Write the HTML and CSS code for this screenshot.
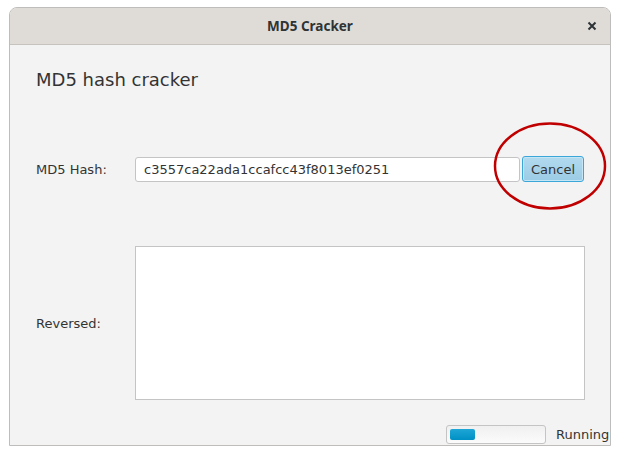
FILE: index.html
```html
<!DOCTYPE html>
<html>
<head>
<meta charset="utf-8">
<link rel="stylesheet" href="styles.css">
</head>
<body>
<div class="window">
  <div class="titlebar">
    <span class="title">MD5 Cracker</span>
    <svg class="close" width="10" height="10" viewBox="0 0 10 10"><path d="M1.5 1.5 L8.5 8.5 M8.5 1.5 L1.5 8.5" stroke="#2e3436" stroke-width="2" fill="none"/></svg>
  </div>
  <div class="content">
    <h1 class="heading">MD5 hash cracker</h1>
    <div class="row hash-row">
      <span class="label">MD5 Hash:</span>
      <div class="controls">
        <div class="field">c3557ca22ada1ccafcc43f8013ef0251</div>
        <button class="btn">Cancel</button>
      </div>
    </div>
    <div class="row rev-row">
      <span class="label">Reversed:</span>
      <div class="area"></div>
    </div>
    <div class="status">
      <div class="progress"><div class="fill"></div></div>
      <span class="status-text">Running</span>
    </div>
    <svg class="mark" width="116" height="92" viewBox="0 0 116 92"><ellipse cx="58" cy="46" rx="55" ry="42.5" fill="none" stroke="#c00000" stroke-width="2.5"/></svg>
  </div>
</div>
</body>
</html>
```

FILE: styles.css
```css
html, body {
  margin: 0;
  padding: 0;
  background: #ffffff;
}
.window {
  margin: 7px 0 0 9px;
  width: 600px;
  height: 437px;
  border: 1px solid #bfbdbb;
  border-radius: 8px 8px 0 0;
  overflow: hidden;
  background: #f3f3f3;
  display: flex;
  flex-direction: column;
}
.titlebar {
  height: 36px;
  flex: none;
  background: #dfdcd8;
  border-bottom: 1px solid #c6c3bf;
  display: flex;
  align-items: center;
  justify-content: center;
  position: relative;
}
.title {
  font-family: "Noto Sans", sans-serif;
  font-weight: 700;
  font-size: 13.5px;
  color: #2e3436;
}
.close {
  position: absolute;
  right: 13px;
  top: 13px;
}
.content {
  position: relative;
  flex: 1;
  padding: 24px 24px 0 26px;
  font-family: "DejaVu Sans", sans-serif;
  color: #333333;
}
.heading {
  margin: 0;
  font-weight: normal;
  font-size: 18px;
  line-height: 22px;
  color: #333333;
}
.row {
  display: flex;
  align-items: center;
}
.label {
  width: 99px;
  flex: none;
  font-size: 13px;
  color: #333333;
}
.hash-row {
  margin-top: 65px;
  height: 26px;
}
.controls {
  display: flex;
  align-items: center;
  gap: 2px;
}
.field {
  box-sizing: border-box;
  width: 385px;
  height: 25px;
  background: #ffffff;
  border: 1px solid #c4c4c4;
  border-radius: 3px;
  font-size: 13px;
  line-height: 23px;
  padding-left: 8px;
  color: #333333;
}
.btn {
  box-sizing: border-box;
  width: 62px;
  height: 26px;
  margin: 0;
  padding: 0;
  font-family: "DejaVu Sans", sans-serif;
  font-size: 13px;
  color: #333333;
  background: linear-gradient(#b2daef, #9bcbe5);
  border: 1px solid #3ba7d8;
  border-radius: 3px;
  box-shadow: inset 0 0 0 1px #c7e6f5;
}
.rev-row {
  margin-top: 64px;
}
.area {
  box-sizing: border-box;
  width: 450px;
  height: 154px;
  background: #ffffff;
  border: 1px solid #c4c4c4;
}
.status {
  display: flex;
  align-items: center;
  gap: 10px;
  margin-top: 25px;
  padding-left: 410px;
  white-space: nowrap;
}
.progress {
  box-sizing: border-box;
  width: 100px;
  height: 19px;
  flex: none;
  border: 1px solid #c4c4c4;
  border-radius: 3px;
  background: linear-gradient(#f0f0f0, #fbfbfb);
  padding: 3px;
}
.fill {
  width: 25px;
  height: 11px;
  border-radius: 2px;
  background: linear-gradient(#1ea6d6, #0090c4);
}
.status-text {
  font-size: 13px;
  color: #333333;
}
.mark {
  position: absolute;
  left: 482px;
  top: 75px;
}
```
